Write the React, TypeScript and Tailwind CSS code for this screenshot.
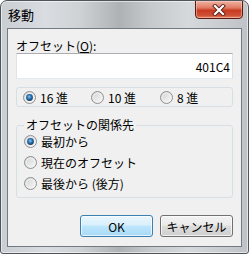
import type { ReactNode } from "react";

const FONT = { fontFamily: '"Noto Sans CJK JP", "Noto Sans", sans-serif' };

function Radio({ checked }: { checked?: boolean }) {
  return (
    <svg width="13" height="13" viewBox="0 0 13 13" className="shrink-0">
      <defs>
        <linearGradient id="rfill" x1="0" y1="0" x2="1" y2="1">
          <stop offset="0" stopColor="#cfd0d1" />
          <stop offset="1" stopColor="#fbfbfb" />
        </linearGradient>
        <radialGradient id="rdot" cx="0.45" cy="0.4" r="0.6">
          <stop offset="0" stopColor="#8fc6ec" />
          <stop offset="0.5" stopColor="#2f74b5" />
          <stop offset="1" stopColor="#113a62" />
        </radialGradient>
      </defs>
      <circle cx="6.5" cy="6.5" r="6" fill="url(#rfill)" stroke="#8f9091" strokeWidth="1" />
      <circle cx="6.5" cy="6.5" r="4.3" fill="none" stroke="#f4f4f4" strokeWidth="0.8" />
      {checked ? <circle cx="6.5" cy="6.5" r="3.4" fill="url(#rdot)" /> : null}
    </svg>
  );
}

function RadioItem({
  checked,
  children,
  className = "",
}: {
  checked?: boolean;
  children: ReactNode;
  className?: string;
}) {
  return (
    <div className={`flex items-center gap-[4px] ${className}`}>
      <Radio checked={checked} />
      <span>{children}</span>
    </div>
  );
}

export default function App() {
  return (
    <div
      className="w-[249px] h-[254px] flex flex-col rounded-t-[7px] rounded-b-[3px] border border-[#50555b] bg-[linear-gradient(90deg,#c9ced3_0%,#d9dce0_18%,#cfd2d5_32%,#aeb2b5_48%,#c6c9cc_60%,#d6d9dc_76%,#bfc3c7_100%)] shadow-[inset_0_0_0_1px_rgba(255,255,255,0.55)] text-[12px] text-black overflow-hidden"
      style={FONT}
    >
      <div className="h-[27px] flex justify-between shrink-0">
        <div className="pl-[7px] pt-[6px] text-[13px] leading-[15px]">移動</div>
        <div className="mr-[5px] w-[48px] h-[19px] -mt-px rounded-b-[4px] border border-[#5a1a12] bg-[linear-gradient(180deg,#eeb4a4_0%,#e07a62_40%,#c83a22_55%,#cf5035_85%,#e2866a_100%)] shadow-[inset_0_0_0_1px_rgba(255,220,210,0.45)] flex items-center justify-center">
          <svg width="14" height="12" viewBox="0 0 14 12">
            <path d="M3 2 L11 10 M11 2 L3 10" stroke="#5a2018" strokeWidth="4" strokeLinecap="square" />
            <path d="M3 2 L11 10 M11 2 L3 10" stroke="#ffffff" strokeWidth="2.2" strokeLinecap="square" />
          </svg>
        </div>
      </div>

      <div className="flex-1 mx-[6px] mb-[6px] border border-[#737a82] bg-[#f0f0f0] px-[8px] pt-[9px] flex flex-col">
        <div className="leading-[15px]">
          オフセット(<span className="underline">O</span>):
        </div>
        <div className="h-[26px] border border-[#abadb3] border-b-[#e3e9ef] border-l-[#e2e3ea] border-r-[#dbdfe6] bg-white flex items-center justify-end pr-[2px] leading-[15px]">
          401C4
        </div>

        <div className="mt-[8px] h-[20px] rounded-[3px] border border-[#d5dfe5] flex items-center pl-[6px] leading-[15px]">
          <RadioItem checked className="w-[68px]">
            16 進
          </RadioItem>
          <RadioItem className="w-[69px]">10 進</RadioItem>
          <RadioItem>8 進</RadioItem>
        </div>

        <fieldset className="mt-[11px] rounded-[3px] border border-[#d5dfe5] px-[7px] pb-[6px]">
          <legend className="px-[2px] leading-[14px]">オフセットの関係先</legend>
          <div className="pt-[2px] flex flex-col gap-[6px] leading-[15px]">
            <RadioItem checked>最初から</RadioItem>
            <RadioItem>現在のオフセット</RadioItem>
            <RadioItem>最後から (後方)</RadioItem>
          </div>
        </fieldset>

        <div className="mt-[17px] flex justify-end gap-[7px]">
          <div className="w-[73px] h-[22px] rounded-[3px] border border-[#3c7fb1] bg-[linear-gradient(180deg,#eaf6fd_0%,#d9f0fc_45%,#bee6fd_50%,#a7d9f5_100%)] shadow-[inset_0_0_0_1px_rgba(255,255,255,0.7)] flex items-center justify-center leading-[15px]">
            OK
          </div>
          <div className="w-[73px] h-[22px] rounded-[3px] border border-[#707070] bg-[linear-gradient(180deg,#f2f2f2_0%,#ebebeb_45%,#dddddd_50%,#cfcfcf_100%)] shadow-[inset_0_0_0_1px_rgba(255,255,255,0.7)] flex items-center justify-center leading-[15px]">
            キャンセル
          </div>
        </div>
      </div>
    </div>
  );
}
